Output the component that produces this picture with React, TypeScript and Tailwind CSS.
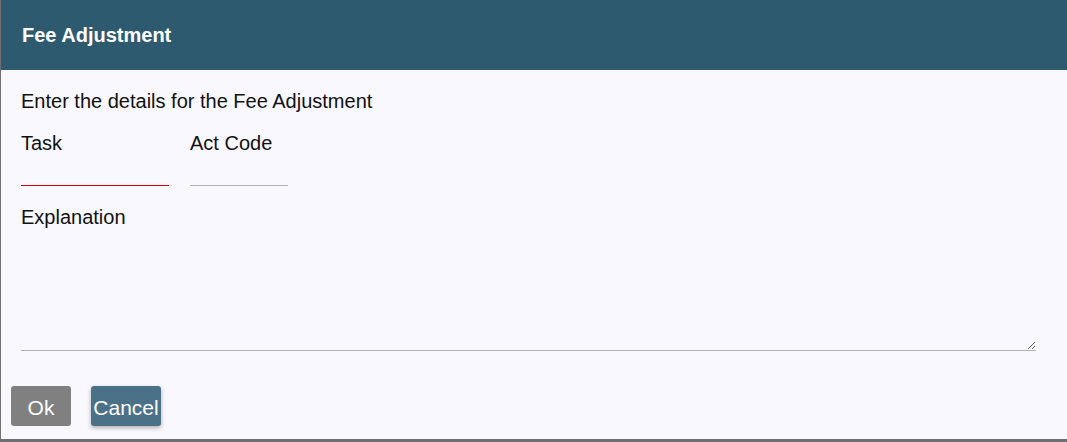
export default function App() {
  return (
    <div className="h-[442px] w-[1067px] overflow-hidden bg-[#6f6f6f] font-['Liberation_Sans',Arial,sans-serif]">
      <div className="ml-[1px] flex h-[439px] flex-col bg-[#f8f8fe]">
        {/* HEADER */}
        <div className="flex h-[70px] items-center bg-[#2e5a70] px-[21px]">
          <h2 className="text-[20px] font-bold text-white">Fee Adjustment</h2>
        </div>
        {/* BODY */}
        <div className="flex flex-col px-[20px] pt-[19px] text-[20px] text-[#111]">
          <p className="leading-[24px]">Enter the details for the Fee Adjustment</p>
          <div className="mt-[18px] flex gap-[21px]">
            <label className="flex w-[148px] flex-col">
              <span className="leading-[24px]">Task</span>
              <input className="mt-[29px] h-[2px] w-full border-b border-[#d00000] bg-transparent outline-none" />
            </label>
            <label className="flex w-[98px] flex-col">
              <span className="leading-[24px]">Act Code</span>
              <input className="mt-[29px] h-[2px] w-full border-b border-[#b0b0b0] bg-transparent outline-none" />
            </label>
          </div>
          <label className="mt-[19px] flex flex-col">
            <span className="leading-[24px]">Explanation</span>
            <textarea className="h-[122px] w-[1015px] border-b border-[#b0b0b0] bg-transparent outline-none" />
          </label>
        </div>
        {/* FOOTER */}
        <div className="mt-[35px] flex gap-[20px] px-[10px]">
          <button className="h-[40px] w-[60px] rounded-[3px] bg-[#808080] pt-[4px] text-[21px] text-white">Ok</button>
          <button className="h-[40px] w-[70px] rounded-[3px] bg-[#4b7189] pt-[4px] text-[21px] text-white shadow-[0_2px_4px_rgba(0,0,0,0.3)]">Cancel</button>
        </div>
      </div>
    </div>
  );
}
